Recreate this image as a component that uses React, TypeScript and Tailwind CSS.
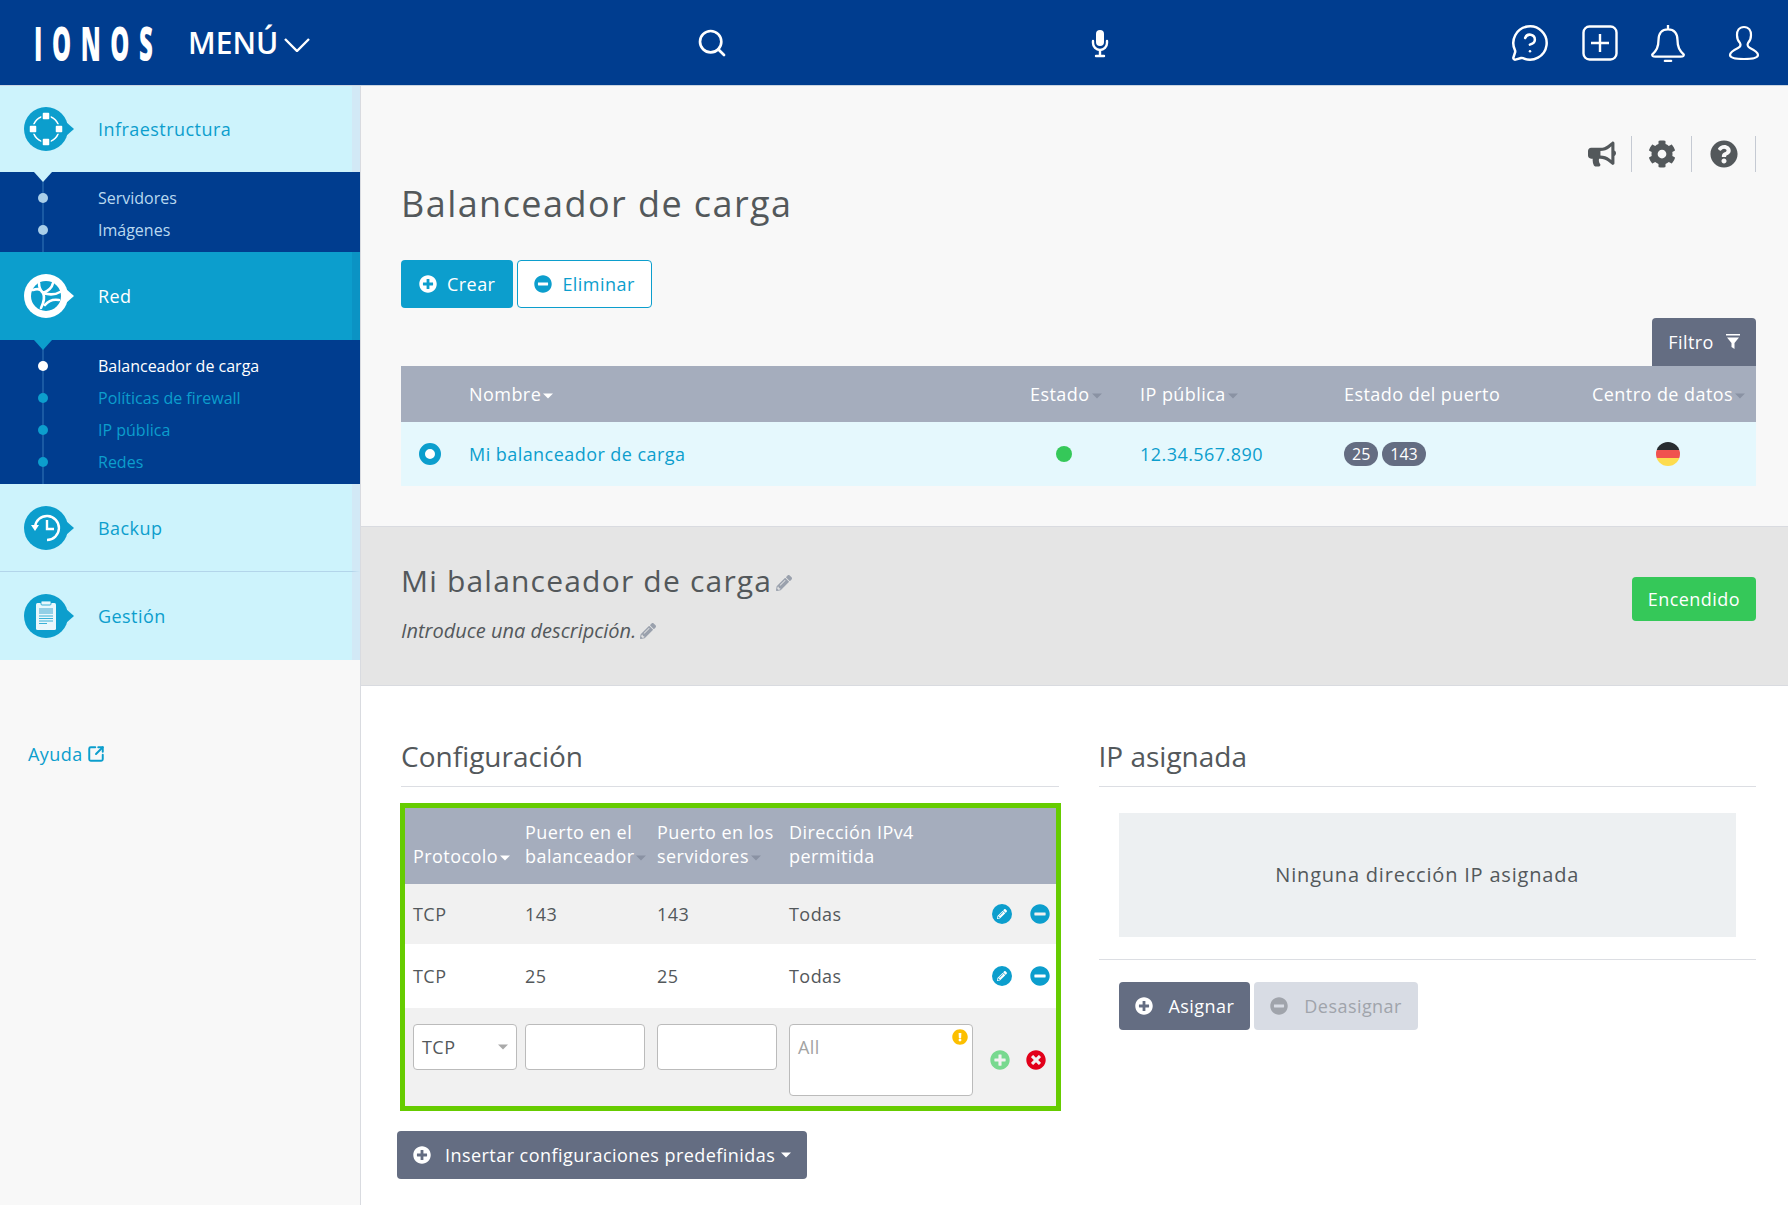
import React from 'react';
import { MessageCircleQuestion, Search, SquareArrowOutUpRight } from 'lucide-react';
import { FaBullhorn, FaCog, FaExclamationCircle, FaMinusCircle, FaPencilAlt, FaPlusCircle, FaQuestionCircle, FaTimesCircle } from 'react-icons/fa';

const Caret = ({ dim }: { dim?: boolean }) => (
    <svg viewBox="0 0 10 5" className={`ml-0.5 inline-block h-1.5 w-2.5 align-middle ${dim ? 'text-[#8a92a3]' : 'text-white'}`}>
        <path d="M0 0h10L5 5z" fill="currentColor" />
    </svg>
);

const Badge = ({ fg, children }: { fg: string; children: React.ReactNode }) => (
    <svg viewBox="0 0 50 44" className="h-11 w-12.5 shrink-0">
        <circle cx="22" cy="22" r="22" fill={fg} />
        <path d="M42 15l8 7-8 7z" fill={fg} />
        {children}
    </svg>
);

const InfraIcon = () => (
    <Badge fg="#0c9ecd">
        <circle cx="22" cy="22" r="13" fill="none" stroke="#fff" strokeWidth="1.6" />
        {[[22, 9], [9, 22], [35, 22], [22, 35]].map(([x, y]) => (
            <rect key={`${x}-${y}`} x={x - 4} y={y - 4} width="8" height="8" rx="1.5" fill="#fff" stroke="#0c9ecd" strokeWidth="1.5" />
        ))}
    </Badge>
);

const NetworkIcon = () => (
    <Badge fg="#fff">
        <circle cx="22" cy="22" r="15" fill="#0c9ecd" />
        <path d="M9 16c5-2 8-1 10 3s1 9-2 15M19 19c5-2 9-5 10-10M19 19c6 2 12 2 17-1M21 31c4-5 8-6 14-5M15 9c0 4 1 7 4 10" fill="none" stroke="#fff" strokeWidth="2.6" strokeLinecap="round" />
    </Badge>
);

const BackupIcon = () => (
    <Badge fg="#0c9ecd">
        <path d="M11 21a12 12 0 1 1 12 13" fill="none" stroke="#fff" strokeWidth="2.4" />
        <path d="M7 19h8l-4 6z" fill="#fff" />
        <path d="M23 14v9h7" fill="none" stroke="#fff" strokeWidth="2.4" />
    </Badge>
);

const ManageIcon = () => (
    <Badge fg="#0c9ecd">
        <rect x="12" y="9" width="20" height="27" rx="1.5" fill="#e8f7fc" />
        <rect x="17" y="7" width="10" height="4" rx="1" fill="#e8f7fc" stroke="#0c9ecd" strokeWidth="0.8" />
        <rect x="15" y="14" width="14" height="6" fill="#93cfe6" />
        <path d="M15 22h14M15 24.5h14M15 27h14M15 29.5h8" stroke="#0c9ecd" strokeWidth="0.8" />
    </Badge>
);

const Notch = ({ color }: { color: string }) => (
    <svg viewBox="0 0 18 10" className="absolute left-8.5 top-0 h-2.5 w-4.5">
        <path d="M0 0h18L9 10z" fill={color} />
    </svg>
);

const SubItem = ({ label, tone }: { label: string; tone: 'soft' | 'active' | 'link' }) => {
    const dot = tone === 'active' ? 'bg-white' : tone === 'soft' ? 'bg-[#a9cfe9]' : 'bg-[#0c9ecd]';
    const text = tone === 'active' ? 'text-white' : tone === 'soft' ? 'text-[#b9d9ef]' : 'text-[#0c9ecd]';
    return (
        <div className="relative flex h-8 items-center">
            <span className={`ml-9.5 mr-12.5 size-2.5 rounded-full ${dot}`}></span>
            <span className={`text-base ${text}`}>{label}</span>
        </div>
    );
};

const NavRow = ({ label, icon, active, divided, height = 'h-22' }: { label: string; icon: React.ReactNode; active?: boolean; divided?: boolean; height?: string }) => (
    <div className={`flex items-center gap-6 border-r-8 pl-6 text-lg tracking-wide ${height} ${active ? 'border-[#0b93c4] bg-[#0c9ecd] text-white' : 'border-[#d2e9f6] bg-[#cdf3fc] text-[#0c9ecd]'} ${divided ? 'border-b border-b-[#b3d5ea]' : ''}`}>
        {icon}
        <span>{label}</span>
    </div>
);

const Sidebar = () => (
    <aside className="w-90 shrink-0">
        <NavRow label="Infraestructura" icon={<InfraIcon />} height="h-21.5" />
        <div className="relative h-20 bg-[#003d8f] pt-2.5">
            <div className="absolute bottom-0 left-10.5 top-0 w-0.5 bg-[#1a5aa3]"></div>
            <Notch color="#cdf3fc" />
            <SubItem label="Servidores" tone="soft" />
            <SubItem label="Imágenes" tone="soft" />
        </div>
        <NavRow label="Red" icon={<NetworkIcon />} active />
        <div className="relative h-36 bg-[#003d8f] pt-2.5">
            <div className="absolute bottom-0 left-10.5 top-0 w-0.5 bg-[#1a5aa3]"></div>
            <Notch color="#0c9ecd" />
            <SubItem label="Balanceador de carga" tone="active" />
            <SubItem label="Políticas de firewall" tone="link" />
            <SubItem label="IP pública" tone="link" />
            <SubItem label="Redes" tone="link" />
        </div>
        <NavRow label="Backup" icon={<BackupIcon />} divided />
        <NavRow label="Gestión" icon={<ManageIcon />} />
        <a className="ml-7 mt-20 flex h-7 items-center gap-1 text-lg tracking-wide text-[#0c9ecd]">
            Ayuda
            <SquareArrowOutUpRight className="size-4.5" strokeWidth={2.6} />
        </a>
    </aside>
);

const Header = () => (
    <header className="flex h-21.5 items-center border-b border-slate-300 bg-[#003d8f] pr-7 text-white">
        <div className="flex w-174 items-center">
            <div className="ml-8.5 w-30">
                <span className="block origin-left scale-x-50 whitespace-nowrap text-5xl font-extrabold leading-none tracking-[0.4em]">IONOS</span>
            </div>
            <span className="ml-8.5 text-3xl font-semibold">MENÚ</span>
            <svg viewBox="0 0 26 14" className="ml-1.5 mt-1 h-3.5 w-6.5" fill="none" stroke="#fff" strokeWidth="2.4">
                <path d="M1 1l12 12L25 1" />
            </svg>
        </div>
        <Search className="size-8" strokeWidth={2} />
        <svg viewBox="0 0 24 32" className="ml-90 h-8 w-6" fill="none" stroke="#fff" strokeWidth="2.4" strokeLinecap="round">
            <rect x="8" y="3" width="8" height="16" rx="4" fill="#fff" stroke="none" />
            <path d="M5 14v2a7 7 0 0 0 14 0v-2M12 23v5M8 29h8" />
        </svg>
        <div className="ml-auto flex items-center gap-8">
            <MessageCircleQuestion className="size-10" strokeWidth={1.5} />
            <svg viewBox="0 0 36 36" className="size-9" fill="none" stroke="#fff" strokeWidth="2.4">
                <rect x="1.5" y="1.5" width="33" height="33" rx="6" />
                <path d="M18 9v18M9 18h18" />
            </svg>
            <svg viewBox="1 0 34 38" className="h-10 w-9" fill="none" stroke="#fff" strokeWidth="2.2" strokeLinejoin="round">
                <path d="M18 2v4M18 6c-6 0-9 4-9 10 0 7-2 10-6 14 0 2 1 2 3 2h24c2 0 3 0 3-2-4-4-6-7-6-14 0-6-3-10-9-10z" />
                <path d="M15 36h6" strokeLinecap="round" />
            </svg>
            <svg viewBox="0 0 32 36" className="ml-2.5 h-9 w-8" fill="none" stroke="#fff" strokeWidth="2.2" strokeLinejoin="round">
                <path d="M16 2c-5 0-7 4-7 8 0 3 1 6 3 8 1 2 0 4-2 5-4 2-8 4-8 7s6 4 14 4 14-1 14-4-4-5-8-7c-2-1-3-3-2-5 2-2 3-5 3-8 0-4-2-8-7-8z" />
            </svg>
        </div>
    </header>
);

const ToolCell = ({ width, children }: { width: string; children: React.ReactNode }) => (
    <div className={`flex h-9 items-center justify-center border-r border-[#c5cad3] ${width}`}>{children}</div>
);

const Th = ({ className, children }: { className?: string; children: React.ReactNode }) => (
    <th className={`text-left font-normal ${className ?? ''}`}>{children}</th>
);

const LoadBalancerList = () => (
    <section className="pb-10 pl-10 pr-8 pt-12.5">
        <div className="flex justify-end text-[#53585b]">
            <ToolCell width="w-15"><FaBullhorn className="size-7" /></ToolCell>
            <ToolCell width="w-15"><FaCog className="size-7" /></ToolCell>
            <ToolCell width="w-16"><FaQuestionCircle className="size-7" /></ToolCell>
        </div>
        <h1 className="mt-3 text-4xl leading-10 tracking-[0.04em] text-[#53585b]">Balanceador de carga</h1>
        <div className="mt-9 flex gap-1 text-lg">
            <button className="flex h-12 items-center gap-2.5 rounded-sm bg-[#0c9ecd] px-4.5 tracking-wide text-white">
                <FaPlusCircle className="size-4.5" />
                Crear
            </button>
            <button className="flex h-12 items-center gap-2.5 rounded-sm border border-[#0c9ecd] bg-white px-4 tracking-wide text-[#0c9ecd]">
                <FaMinusCircle className="size-4.5" />
                Eliminar
            </button>
        </div>
        <div className="mt-2.5 flex justify-end">
            <button className="flex h-12 w-26 items-center justify-center gap-3 rounded-t-sm bg-[#646d82] text-lg tracking-wide text-white">
                Filtro
                <svg viewBox="0 0 14 16" className="h-4 w-3.5" fill="#fff">
                    <path d="M0 0h14v1.5H0zM1 3.5h12L8.5 9v6l-3-2V9z" />
                </svg>
            </button>
        </div>
        <table className="w-full table-fixed text-lg tracking-wide">
            <thead className="bg-[#a5adbd] text-white">
                <tr className="h-14">
                    <Th className="w-17"> </Th>
                    <Th>Nombre<Caret /></Th>
                    <Th className="w-27.5">Estado<Caret dim /></Th>
                    <Th className="w-51">IP pública<Caret dim /></Th>
                    <Th className="w-62">Estado del puerto</Th>
                    <Th className="w-41">Centro de datos<Caret dim /></Th>
                </tr>
            </thead>
            <tbody className="bg-[#e5f8fd] text-[#0c9ecd]">
                <tr className="h-16">
                    <td>
                        <span className="ml-4.5 block size-5.5 rounded-full border-6 border-[#0c9ecd] bg-white"></span>
                    </td>
                    <td>Mi balanceador de carga</td>
                    <td><span className="ml-6.5 block size-4 rounded-full bg-[#35c859]"></span></td>
                    <td>12.34.567.890</td>
                    <td>
                        <div className="flex gap-1 text-base tracking-normal text-white">
                            <span className="rounded-full bg-[#646d82] px-2">25</span>
                            <span className="rounded-full bg-[#646d82] px-2">143</span>
                        </div>
                    </td>
                    <td>
                        <div className="ml-16 flex size-6 flex-col overflow-hidden rounded-full">
                            <span className="flex-1 bg-[#282c30]"></span>
                            <span className="flex-1 bg-[#f0524f]"></span>
                            <span className="flex-1 bg-[#fddc4e]"></span>
                        </div>
                    </td>
                </tr>
            </tbody>
        </table>
    </section>
);

const DetailBand = () => (
    <section className="flex h-40 items-start justify-between border-y border-[#d9dbe0] bg-[#e5e5e5] pl-10 pr-8 pt-9">
        <div className="text-[#53585b]">
            <h2 className="flex items-center gap-1 text-3xl leading-9 tracking-[0.04em]">
                Mi balanceador de carga
                <FaPencilAlt className="mt-1 size-4 text-[#9aa1ad]" />
            </h2>
            <p className="mt-4.5 flex items-center gap-1 text-xl italic leading-7">
                Introduce una descripción.
                <FaPencilAlt className="size-4 text-[#9aa1ad]" />
            </p>
        </div>
        <button className="mt-3.5 flex h-11 items-center rounded-sm bg-[#35c859] px-4 text-lg tracking-wide text-white">Encendido</button>
    </section>
);

const RowActions = () => (
    <div className="flex items-center gap-4.5 pr-1.5">
        <span className="flex size-5 items-center justify-center rounded-full bg-[#0c9ecd]">
            <FaPencilAlt className="size-2.5 text-white" />
        </span>
        <FaMinusCircle className="size-5 text-[#0c9ecd]" />
    </div>
);

const ConfigRow = ({ port, height, shaded }: { port: string; height: string; shaded?: boolean }) => (
    <tr className={shaded ? 'bg-[#f1f1f1]' : 'bg-white'}>
        <td className={`pl-2 ${height}`}>TCP</td>
        <td className="pl-2">{port}</td>
        <td className="pl-2">{port}</td>
        <td className="pl-2">
            <div className="flex items-center justify-between">
                Todas
                <RowActions />
            </div>
        </td>
    </tr>
);

const ConfigTable = () => (
    <div className="-ml-px -mr-0.5 mt-4 border-5 border-[#66cc00]">
        <table className="w-full table-fixed text-lg tracking-wide text-[#53585b]">
            <thead className="bg-[#a5adbd] text-white">
                <tr className="h-19 align-bottom leading-6">
                    <Th className="w-28 pb-4 pl-2">Protocolo<Caret /></Th>
                    <Th className="w-33 whitespace-nowrap pb-4 pl-2">Puerto en el<br />balanceador<Caret dim /></Th>
                    <Th className="w-33 whitespace-nowrap pb-4 pl-2">Puerto en los<br />servidores<Caret dim /></Th>
                    <Th className="pb-4 pl-2">Dirección IPv4<br />permitida</Th>
                </tr>
            </thead>
            <tbody>
                <ConfigRow port="143" height="h-15" shaded />
                <ConfigRow port="25" height="h-16" />
                <tr className="bg-[#f1f1f1] align-top">
                    <td className="pl-2 pt-4">
                        <div className="flex h-11.5 w-26 items-center justify-between rounded-sm border border-[#bbb] bg-white px-2">
                            TCP
                            <svg viewBox="0 0 10 5" className="h-1.5 w-2.5 text-[#aaa]"><path d="M0 0h10L5 5z" fill="currentColor" /></svg>
                        </div>
                    </td>
                    <td className="pl-2 pt-4">
                        <input className="h-11.5 w-30 rounded-sm border border-[#bbb] bg-white" />
                    </td>
                    <td className="pl-2 pt-4">
                        <input className="h-11.5 w-30 rounded-sm border border-[#bbb] bg-white" />
                    </td>
                    <td className="pb-2.5 pl-2 pt-4">
                        <div className="flex items-center justify-between pr-2.5">
                            <div className="relative h-18 w-46 rounded-sm border border-[#bbb] bg-white px-2 py-2 text-[#a3a3a3]">
                                All
                                <FaExclamationCircle className="absolute right-1 top-1 size-4 text-[#fcbf00]" />
                            </div>
                            <div className="flex items-center gap-4">
                                <FaPlusCircle className="size-5 text-[#78d98f]" />
                                <FaTimesCircle className="size-5 text-[#e2001a]" />
                            </div>
                        </div>
                    </td>
                </tr>
            </tbody>
        </table>
    </div>
);

const SectionTitle = ({ children }: { children: React.ReactNode }) => (
    <h3 className="border-b border-[#dcdee3] pb-3 text-[28px] leading-9 text-[#53585b]">{children}</h3>
);

const ConfigSection = () => (
    <section className="grid grid-cols-2 gap-10 pb-6 pl-10 pr-8 pt-13">
        <div>
            <SectionTitle>Configuración</SectionTitle>
            <ConfigTable />
            <button className="-ml-1 mt-5 flex h-12 items-center gap-3.5 rounded-sm bg-[#646d82] px-4 text-lg tracking-wide text-white">
                <FaPlusCircle className="size-4.5" />
                <span>Insertar configuraciones predefinidas</span>
                <svg viewBox="0 0 10 5" className="-ml-2 h-1.5 w-2.5"><path d="M0 0h10L5 5z" fill="#fff" /></svg>
            </button>
        </div>
        <div>
            <SectionTitle>IP asignada</SectionTitle>
            <div className="mx-5 mt-6.5 flex h-31 items-center justify-center bg-[#edf0f2] text-xl tracking-[0.04em] text-[#53585b]">
                Ninguna dirección IP asignada
            </div>
            <div className="mt-5.5 flex gap-1 border-t border-[#dcdee3] px-5 pt-5.5 text-lg tracking-wide">
                <button className="flex h-12 items-center gap-4 rounded-sm bg-[#646d82] px-4 text-white">
                    <FaPlusCircle className="size-4.5" />
                    Asignar
                </button>
                <button className="flex h-12 items-center gap-4 rounded-sm bg-[#d8dce4] px-4 text-[#a0a4ab]">
                    <FaMinusCircle className="size-4.5" />
                    Desasignar
                </button>
            </div>
        </div>
    </section>
);

export default function App() {
    return (
        <div className="flex min-h-screen flex-col bg-[#f8f8f8] font-['Open_Sans',sans-serif]">
            <Header />
            <div className="flex flex-1">
                <Sidebar />
                <main className="flex flex-1 flex-col border-l border-[#d9dbe0]">
                    <LoadBalancerList />
                    <DetailBand />
                    <div className="flex-1 bg-white">
                        <ConfigSection />
                    </div>
                </main>
            </div>
        </div>
    );
}
